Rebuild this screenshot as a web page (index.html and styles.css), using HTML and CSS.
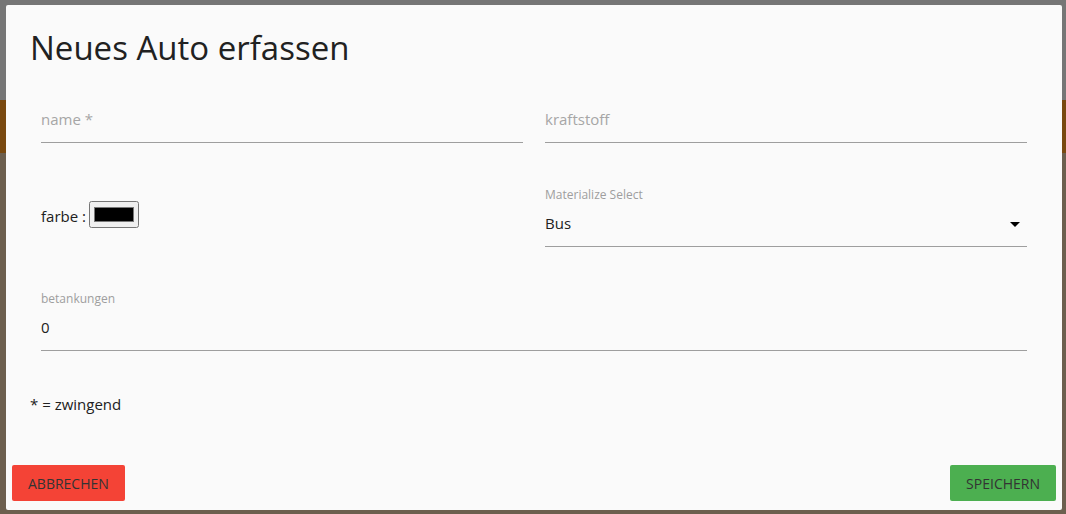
FILE: index.html
```html
<!DOCTYPE html>
<html lang="de">
<head>
<meta charset="utf-8">
<title>Neues Auto erfassen</title>
<link rel="stylesheet" href="styles.css">
</head>
<body>
<div class="backdrop">
  <div class="bg-top"></div>
  <div class="bg-band"></div>
  <div class="bg-rest"></div>
</div>
<div class="modal">
  <div class="modal-content">
    <h4 class="title">Neues Auto erfassen</h4>
    <div class="grid">
      <div class="field">
        <div class="field-label"></div>
        <div class="control placeholder">name *</div>
      </div>
      <div class="field">
        <div class="field-label"></div>
        <div class="control placeholder">kraftstoff</div>
      </div>
      <div class="field">
        <div class="color-field">
          <span class="color-text">farbe :</span>
          <input class="color-input" type="color" value="#000000">
        </div>
      </div>
      <div class="field select-field">
        <div class="field-label">Materialize Select</div>
        <div class="control">Bus</div>
        <svg class="caret" width="24" height="24" viewBox="0 0 24 24"><path d="M7 10l5 5 5-5z" fill="#000"/></svg>
      </div>
      <div class="field wide">
        <div class="field-label">betankungen</div>
        <div class="control">0</div>
      </div>
    </div>
    <p class="note">* = zwingend</p>
  </div>
  <div class="modal-footer">
    <button class="btn btn-red">Abbrechen</button>
    <button class="btn btn-green">Speichern</button>
  </div>
</div>
</body>
</html>
```
FILE: styles.css
```css
html, body {
  margin: 0;
  padding: 0;
  height: 100%;
}
body {
  font-family: "Open Sans", "Noto Sans", sans-serif;
  overflow: hidden;
  position: relative;
}
.backdrop {
  display: flex;
  flex-direction: column;
  height: 100%;
}
.bg-top { height: 100px; background: #767676; }
.bg-band { height: 53px; background: #79490f; }
.bg-rest { flex: 1; background: #6c5f4e; }

.modal {
  position: absolute;
  left: 6px;
  top: 5px;
  width: 1056px;
  height: 505px;
  background: #fafafa;
  display: flex;
  flex-direction: column;
  border-radius: 2px;
}
.modal-content {
  flex: 1;
  padding: 23px 24px 0;
}
.title {
  margin: 0 0 16px;
  font-size: 33px;
  line-height: 40px;
  font-weight: 400;
  color: #212121;
}
.grid {
  display: grid;
  grid-template-columns: 1fr 1fr;
  row-gap: 45px;
}
.field {
  padding: 0 11px;
  position: relative;
}
.field.wide {
  grid-column: 1 / 3;
}
.field-label {
  height: 14px;
  font-size: 12px;
  line-height: 14px;
  color: #9e9e9e;
}
.control {
  height: 44px;
  line-height: 43px;
  font-size: 15px;
  color: #212121;
  border-bottom: 1px solid #9e9e9e;
}
.control.placeholder {
  color: #a6a6a6;
}
.caret {
  position: absolute;
  right: 11px;
  top: 24px;
}
.color-field {
  display: flex;
  align-items: center;
  padding-top: 13px;
  font-size: 15px;
  color: #212121;
}
.color-text {
  line-height: 20px;
  padding-top: 3px;
  margin-right: 3px;
}
.color-input {
  width: 50px;
  height: 27px;
  margin: 0;
}
.note {
  margin: 43px 0 0;
  font-size: 15px;
  line-height: 20px;
  color: #212121;
}
.modal-footer {
  height: 56px;
  box-sizing: border-box;
  padding: 0 6px 9px;
  display: flex;
  justify-content: space-between;
  align-items: flex-end;
}
.btn {
  height: 36px;
  border: none;
  border-radius: 2px;
  padding: 0 16px;
  font-family: "Open Sans", "Noto Sans", sans-serif;
  font-size: 14px;
  text-transform: uppercase;
  color: #333;
  cursor: pointer;
}
.btn-red { background: #f44336; }
.btn-green { background: #4caf50; }
```
